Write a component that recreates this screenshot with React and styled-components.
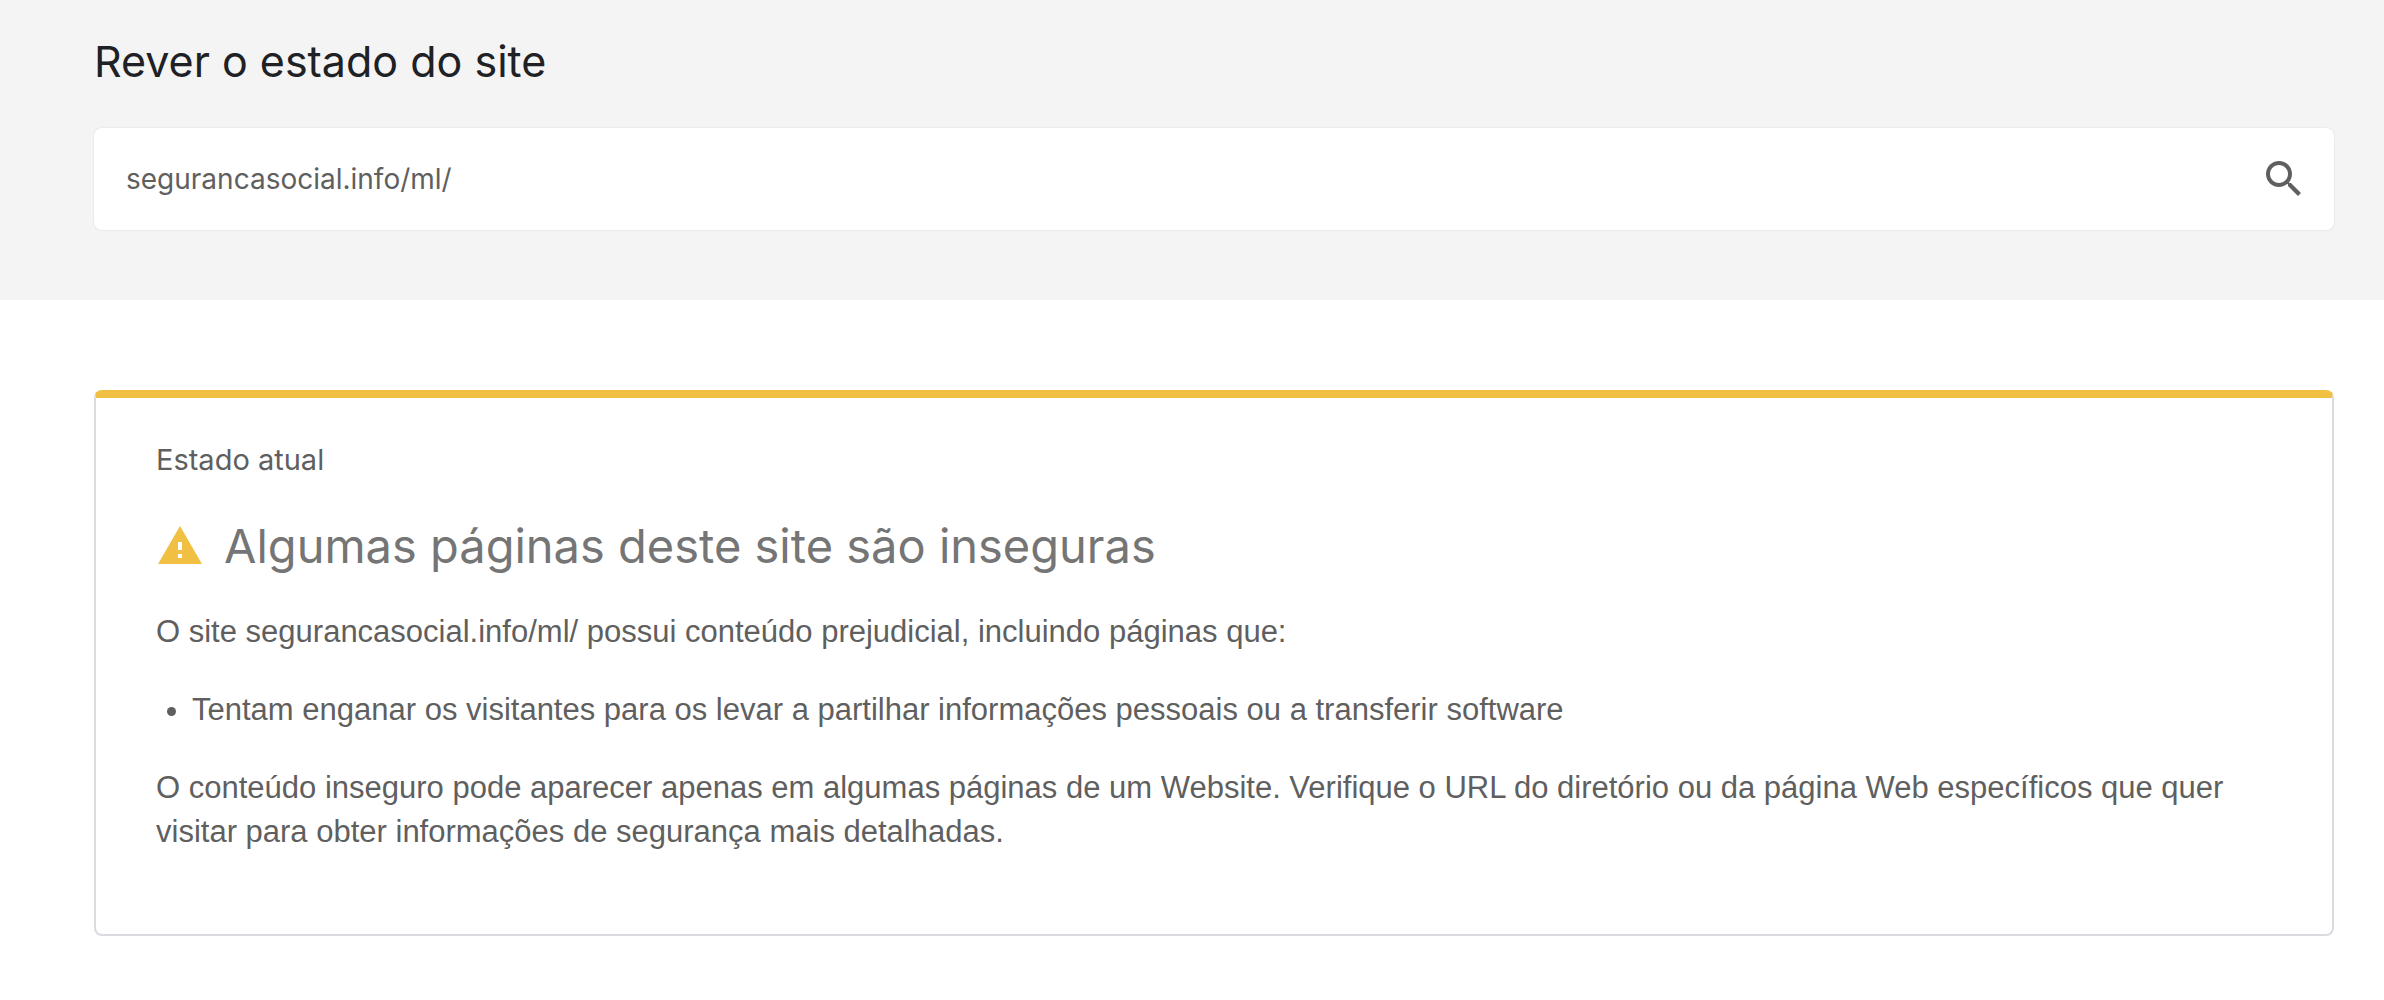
import React, { useState } from "react";
import styled, { createGlobalStyle } from "styled-components";

const SITE = "segurancasocial.info/ml/";

function SearchIcon() {
    return (
        <svg width="48" height="48" viewBox="0 0 24 24" fill="currentColor" aria-hidden="true">
            <path d="M15.5 14h-.79l-.28-.27C15.41 12.59 16 11.11 16 9.5 16 5.91 13.09 3 9.5 3S3 5.91 3 9.5 5.91 16 9.5 16c1.61 0 3.09-.59 4.23-1.57l.27.28v.79l5 4.99L20.49 19l-4.99-5zm-6 0C7.01 14 5 11.99 5 9.5S7.01 5 9.5 5 14 7.01 14 9.5 11.99 14 9.5 14z" />
        </svg>
    )
}

function WarningIcon() {
    return (
        <svg width="48" height="48" viewBox="0 0 24 24" fill="#f1bf42" aria-hidden="true">
            <path d="M1 21h22L12 2 1 21zm12-3h-2v-2h2v2zm0-4h-2v-4h2v4z" />
        </svg>
    )
}

function App() {

    const [url, setUrl] = useState(SITE);

    return (
        <>
            <GlobalStyle />
            <SearchSection>
                <Title htmlFor="url">Rever o estado do site</Title>
                <SearchBox onSubmit={(e) => e.preventDefault()}>
                    <SearchInput id="url" type="text" value={url} onChange={(e) => setUrl(e.target.value)} />
                    <SearchButton type="submit" aria-label="Pesquisar">
                        <SearchIcon />
                    </SearchButton>
                </SearchBox>
            </SearchSection>
            <Main>
                <Card>
                    <CardLabel>Estado atual</CardLabel>
                    <Status>
                        <WarningIcon />
                        <StatusText>Algumas páginas deste site são inseguras</StatusText>
                    </Status>
                    <Text>O site {SITE} possui conteúdo prejudicial, incluindo páginas que:</Text>
                    <List>
                        <li>Tentam enganar os visitantes para os levar a partilhar informações pessoais ou a transferir software</li>
                    </List>
                    <Text>
                        O conteúdo inseguro pode aparecer apenas em algumas páginas de um Website. Verifique o URL do diretório ou da página Web específicos que quer visitar para obter informações de segurança mais detalhadas.
                    </Text>
                </Card>
            </Main>
        </>
    )
}
export default App;

const heading = `"Google Sans", Inter, sans-serif`;

const GlobalStyle = createGlobalStyle`
    * {
        box-sizing: border-box;
    }
    body {
        margin: 0;
        background-color: #fff;
        color: #5f5f5f;
        font-family: "Liberation Sans", Arial, sans-serif;
        font-size: 31px;
        line-height: 44px;
    }
`
const SearchSection = styled.section`
    display: flex;
    flex-direction: column;
    gap: 36px;
    padding: 30px 50px 70px 94px;
    background-color: #f4f4f4;
`
const Title = styled.label`
    color: #202124;
    font-family: ${heading};
    font-size: 43px;
    line-height: 62px;
`
const SearchBox = styled.form`
    display: flex;
    align-items: center;
    height: 102px;
    padding: 0 26px 0 32px;
    background-color: #fff;
    border-radius: 8px;
    box-shadow: 0 0 2px rgba(0, 0, 0, 0.12);
`
const SearchInput = styled.input`
    flex: 1;
    min-width: 0;
    padding: 0;
    border: 0;
    outline: 0;
    background: none;
    color: #5f5f5f;
    font-family: ${heading};
    font-size: 28px;
    line-height: 44px;
`
const SearchButton = styled.button`
    display: flex;
    padding: 0;
    border: 0;
    background: none;
    color: #5f5f5f;
    cursor: pointer;
`
const Main = styled.main`
    padding: 90px 50px 62px 94px;
`
const Card = styled.section`
    padding: 40px 60px 80px;
    border: 2px solid #dadae0;
    border-top: 8px solid #f1bf42;
    border-radius: 8px;
`
const CardLabel = styled.div`
    font-family: ${heading};
    font-size: 29px;
`
const Status = styled.div`
    display: flex;
    align-items: center;
    gap: 20px;
    margin-top: 34px;
`
const StatusText = styled.h1`
    margin: 0;
    color: #757575;
    font-family: ${heading};
    font-size: 47px;
    font-weight: 400;
    line-height: 60px;
`
const Text = styled.p`
    margin: 34px 0 0;
`
const List = styled.ul`
    margin: 34px 0 0;
    padding-left: 36px;
`
